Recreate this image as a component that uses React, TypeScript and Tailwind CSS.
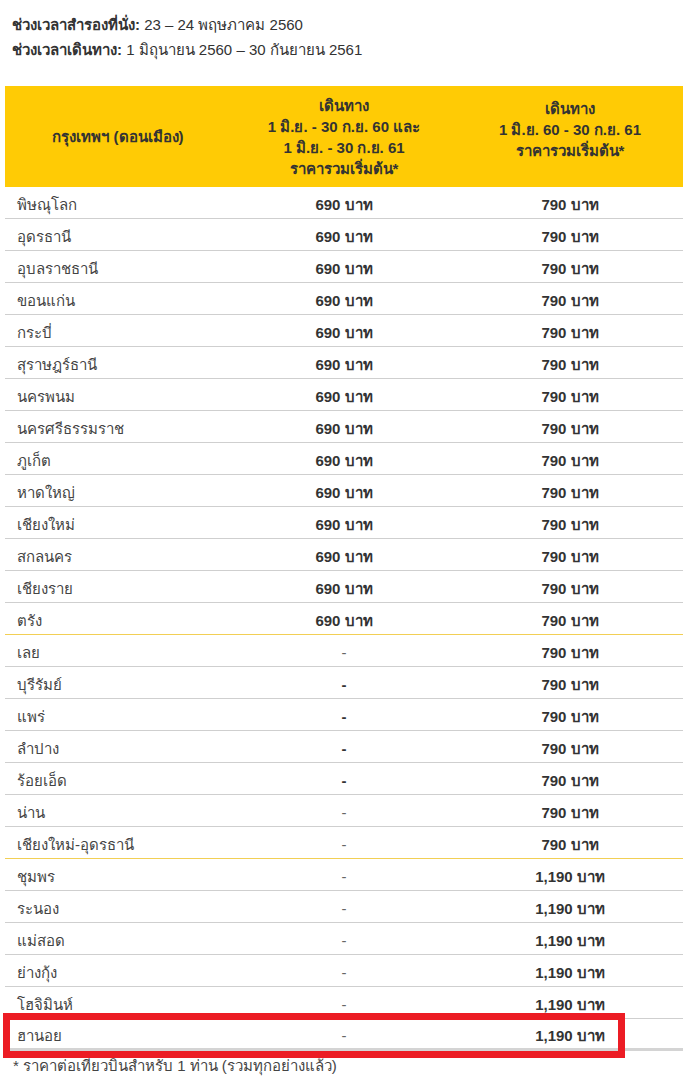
const rows: { city: string; a: string; b: string; sep?: boolean; boldDash?: boolean }[] = [
  { city: 'พิษณุโลก', a: '690 บาท', b: '790 บาท' },
  { city: 'อุดรธานี', a: '690 บาท', b: '790 บาท' },
  { city: 'อุบลราชธานี', a: '690 บาท', b: '790 บาท' },
  { city: 'ขอนแก่น', a: '690 บาท', b: '790 บาท' },
  { city: 'กระบี่', a: '690 บาท', b: '790 บาท' },
  { city: 'สุราษฎร์ธานี', a: '690 บาท', b: '790 บาท' },
  { city: 'นครพนม', a: '690 บาท', b: '790 บาท' },
  { city: 'นครศรีธรรมราช', a: '690 บาท', b: '790 บาท' },
  { city: 'ภูเก็ต', a: '690 บาท', b: '790 บาท' },
  { city: 'หาดใหญ่', a: '690 บาท', b: '790 บาท' },
  { city: 'เชียงใหม่', a: '690 บาท', b: '790 บาท' },
  { city: 'สกลนคร', a: '690 บาท', b: '790 บาท' },
  { city: 'เชียงราย', a: '690 บาท', b: '790 บาท' },
  { city: 'ตรัง', a: '690 บาท', b: '790 บาท', sep: true },
  { city: 'เลย', a: '-', b: '790 บาท' },
  { city: 'บุรีรัมย์', a: '-', b: '790 บาท', boldDash: true },
  { city: 'แพร่', a: '-', b: '790 บาท', boldDash: true },
  { city: 'ลำปาง', a: '-', b: '790 บาท', boldDash: true },
  { city: 'ร้อยเอ็ด', a: '-', b: '790 บาท', boldDash: true },
  { city: 'น่าน', a: '-', b: '790 บาท' },
  { city: 'เชียงใหม่-อุดรธานี', a: '-', b: '790 บาท', sep: true },
  { city: 'ชุมพร', a: '-', b: '1,190 บาท' },
  { city: 'ระนอง', a: '-', b: '1,190 บาท' },
  { city: 'แม่สอด', a: '-', b: '1,190 บาท' },
  { city: 'ย่างกุ้ง', a: '-', b: '1,190 บาท' },
  { city: 'โฮจิมินห์', a: '-', b: '1,190 บาท' },
  { city: 'ฮานอย', a: '-', b: '1,190 บาท' },
];

export default function App() {
  return (
    <div className="relative h-[1080px] w-[690px] overflow-hidden bg-white font-['Liberation_Sans',Arial,sans-serif] text-[15px] text-[#333]">
      <div className="px-[12px] pt-[12px] leading-[25px]">
        <p>
          <span className="font-bold">ช่วงเวลาสำรองที่นั่ง:</span> 23 – 24 พฤษภาคม 2560
        </p>
        <p>
          <span className="font-bold">ช่วงเวลาเดินทาง:</span> 1 มิถุนายน 2560 – 30 กันยายน 2561
        </p>
      </div>

      <div className="ml-[5px] mt-[24px] w-[678px]">
        <div className="grid h-[101px] grid-cols-[226px_226px_226px] items-center bg-[#ffcb05] text-center font-bold leading-[21px] text-[#333]">
          <div>กรุงเทพฯ (ดอนเมือง)</div>
          <div>
            <p>เดินทาง</p>
            <p>1 มิ.ย. - 30 ก.ย. 60 และ</p>
            <p>1 มิ.ย. - 30 ก.ย. 61</p>
            <p>ราคารวมเริ่มต้น*</p>
          </div>
          <div className="-mt-[14px]">
            <p>เดินทาง</p>
            <p>1 มิ.ย. 60 - 30 ก.ย. 61</p>
            <p>ราคารวมเริ่มต้น*</p>
          </div>
        </div>

        {rows.map((row, i) => {
          const last = i === rows.length - 1;
          const border = row.sep
            ? 'border-b border-[#f2cf55]'
            : last
              ? 'border-b-[3px] border-[#d4d4d4]'
              : 'border-b border-[#cfcfcf]';
          const dash = row.a !== '-' || row.boldDash ? 'font-bold' : 'font-normal text-[#666]';
          return (
            <div key={row.city} className={`grid h-[32px] grid-cols-[226px_226px_226px] items-center pt-[5px] ${border}`}>
              <div className="pl-[12px] text-[#444]">{row.city}</div>
              <div className={`text-center ${dash}`}>{row.a}</div>
              <div className="text-center font-bold">{row.b}</div>
            </div>
          );
        })}
      </div>

      <p className="pl-[13px] pt-[4px] text-[#444]">* ราคาต่อเที่ยวบินสำหรับ 1 ท่าน (รวมทุกอย่างแล้ว)</p>

      <div className="pointer-events-none absolute left-[3px] top-[1013px] h-[45px] w-[622px] border-[7px] border-[#ec1c24]" />
    </div>
  );
}
